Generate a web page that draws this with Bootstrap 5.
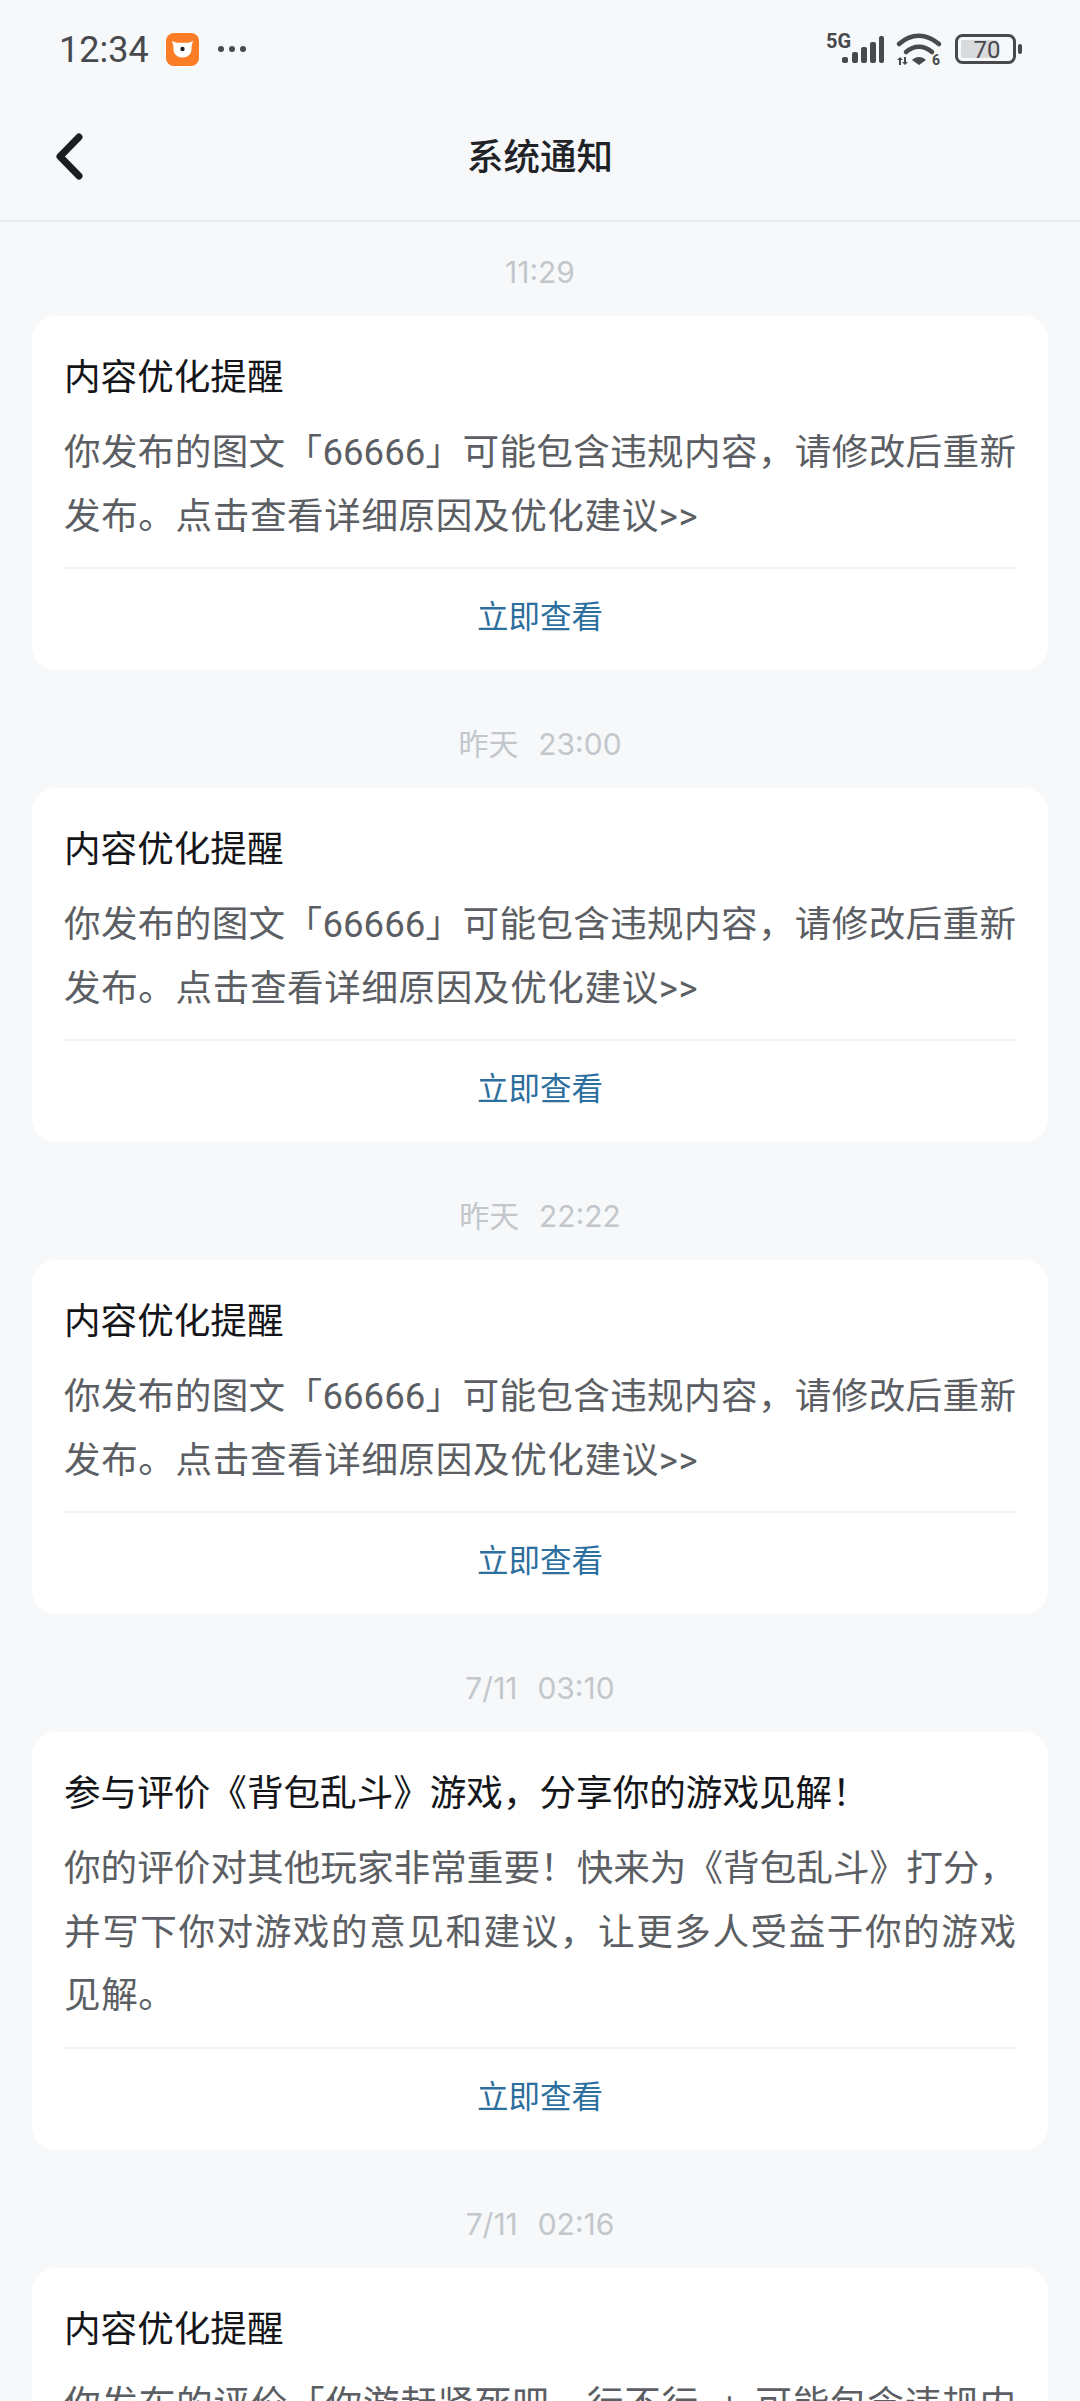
<!DOCTYPE html>
<html lang="zh">
<head>
    <meta charset="UTF-8">
    <meta name="viewport" content="width=device-width, initial-scale=1.0">
    <title>系统通知</title>
    <link href="https://cdn.jsdelivr.net/npm/bootstrap@5.3.2/dist/css/bootstrap.min.css" rel="stylesheet">
    <style>
        html, body { height: 2401px; overflow: hidden; }
        body { background: #f6f8fa; font-family: Roboto, "Noto Sans CJK SC", sans-serif; }
        .status-row { height: 98px; padding: 0 55px 0 59px; color: #47494d; }
        .clock { font-size: 36px; width: 88px; padding-top: 2px; }
        .app-icon { width: 33px; height: 33px; margin-left: 19px; }
        .more-dots { width: 30px; height: 8px; margin-left: 18px; }
        .title-row { height: 124px; padding-bottom: 2px; border-bottom: 2px solid #e8eaec; }
        .back-btn { left: 54px; top: 33px; width: 30px; height: 52px; }
        .page-title { font-size: 36.5px; font-weight: 500; color: #1f2226; }
        .feed { padding: 0 32px; }
        .stamp { height: 118px; padding-top: 46px; font-family: Inter, "Noto Sans CJK SC", sans-serif; font-size: 30px; line-height: 56px; word-spacing: 1.5px; color: #c3c7cc; white-space: pre; }
        .stamp-first { height: 94px; padding-top: 22px; }
        .notice { background: #fff; border-radius: 24px; padding: 0 32px; }
        .notice-title { font-size: 36.6px; line-height: 48px; color: #14161a; padding-top: 38px; }
        .notice-body { font-size: 36.6px; line-height: 63.5px; color: #5b5e63; padding: 19px 0; }
        .body-line { white-space: nowrap; text-align-last: justify; }
        .body-line:last-child { text-align-last: left; letter-spacing: .6px; }
        .notice-link { border-top: 2px solid #f2f3f5; height: 103px; font-size: 31.5px; line-height: 97px; color: #2d6f9e; text-decoration: none; }
    </style>
</head>
<body>

    <div class="status-row d-flex align-items-center">
        <span class="clock">12:34</span>
        <svg class="app-icon" viewBox="0 0 33 33"><rect width="33" height="33" rx="8" fill="#fb7d26"/><path d="M6 8l4.500 1.800h12L27 8l-1.500 5.500c.7 5-1.500 11-9 11s-9.700-6-9-11z" fill="#fff"/><circle cx="16.500" cy="16" r="2.200" fill="#222"/></svg>
        <svg class="more-dots" viewBox="0 0 30 8"><circle cx="4" cy="4" r="3" fill="#47494d"/><circle cx="15" cy="4" r="3" fill="#47494d"/><circle cx="26" cy="4" r="3" fill="#47494d"/></svg>
        <svg class="ms-auto" width="200" height="38" viewBox="825 30 200 38" fill="#47494d">
            <text x="826" y="48" font-family="Roboto, sans-serif" font-size="20" font-weight="700">5G</text>
            <rect x="842" y="57" width="6" height="6" rx="2"/><rect x="852" y="52" width="6" height="11" rx="2"/><rect x="861" y="47" width="6" height="16" rx="2"/><rect x="870" y="42" width="6" height="21" rx="2"/><rect x="879" y="36" width="5" height="27" rx="2"/>
            <g fill="none" stroke="#47494d" stroke-width="4.500" stroke-linecap="round"><path d="M899 44c12-11 27-11 40 0"/><path d="M906 52c8-7 18-7 26 0"/></g>
            <path d="M912 60c4-4 10-4 14 0l-7 5z"/>
            <path d="M897 60l3-3 3 3h-2v5h-2v-5zM904 57h2v5h2l-3 3-3-3h2z"/>
            <text x="932" y="65" font-family="Roboto, sans-serif" font-size="14" font-weight="700">6</text>
            <rect x="956.500" y="35.500" width="58" height="27" rx="6" fill="none" stroke="#47494d" stroke-width="3"/>
            <rect x="961" y="40" width="37" height="18" rx="2" fill="#d9dadc"/>
            <text x="987" y="58" text-anchor="middle" font-family="Roboto, sans-serif" font-size="24" font-weight="400">70</text>
            <rect x="1018" y="44" width="4" height="10" rx="2"/>
        </svg>
    </div>

    <div class="title-row position-relative d-flex align-items-center justify-content-center">
        <svg class="back-btn position-absolute" viewBox="0 0 30 52"><path d="M25 6L6 25.500 25 45" fill="none" stroke="#1b1d20" stroke-width="7" stroke-linecap="round" stroke-linejoin="round"/></svg>
        <span class="page-title">系统通知</span>
    </div>

    <div class="feed" id="feed"></div>

    <script>
        // lines are broken by hand, the app wraps them a little differently than the browser would
        const reviewBody = ['你发布的图文「66666」可能包含违规内容，请修改后重新', '发布。点击查看详细原因及优化建议>>'];
        const items = [
            { time: '11:29', title: '内容优化提醒', body: reviewBody },
            { time: '昨天  23:00', title: '内容优化提醒', body: reviewBody },
            { time: '昨天  22:22', title: '内容优化提醒', body: reviewBody },
            { time: '7/11  03:10', title: '参与评价《背包乱斗》游戏，分享你的游戏见解！', body: ['你的评价对其他玩家非常重要！快来为《背包乱斗》打分，', '并写下你对游戏的意见和建议，让更多人受益于你的游戏', '见解。'] },
            { time: '7/11  02:16', title: '内容优化提醒', body: ['你发布的评价「你游赶紧死吧，行不行，」可能包含违规内', '容，请修改后重新发布。'] }
        ];
        const feed = document.getElementById('feed');
        items.forEach((item, i) => {
            const lines = item.body.map(line => `<div class="body-line">${line.replace(/>/g, '&gt;')}</div>`).join('');
            feed.insertAdjacentHTML('beforeend', `
                <div class="stamp text-center ${i === 0 ? 'stamp-first' : ''}">${item.time}</div>
                <div class="notice">
                    <div class="notice-title">${item.title}</div>
                    <div class="notice-body">${lines}</div>
                    <a class="notice-link d-block text-center" href="#">立即查看</a>
                </div>`);
        });
    </script>
    <script src="https://cdn.jsdelivr.net/npm/bootstrap@5.3.2/dist/js/bootstrap.bundle.min.js"></script>
</body>
</html>
